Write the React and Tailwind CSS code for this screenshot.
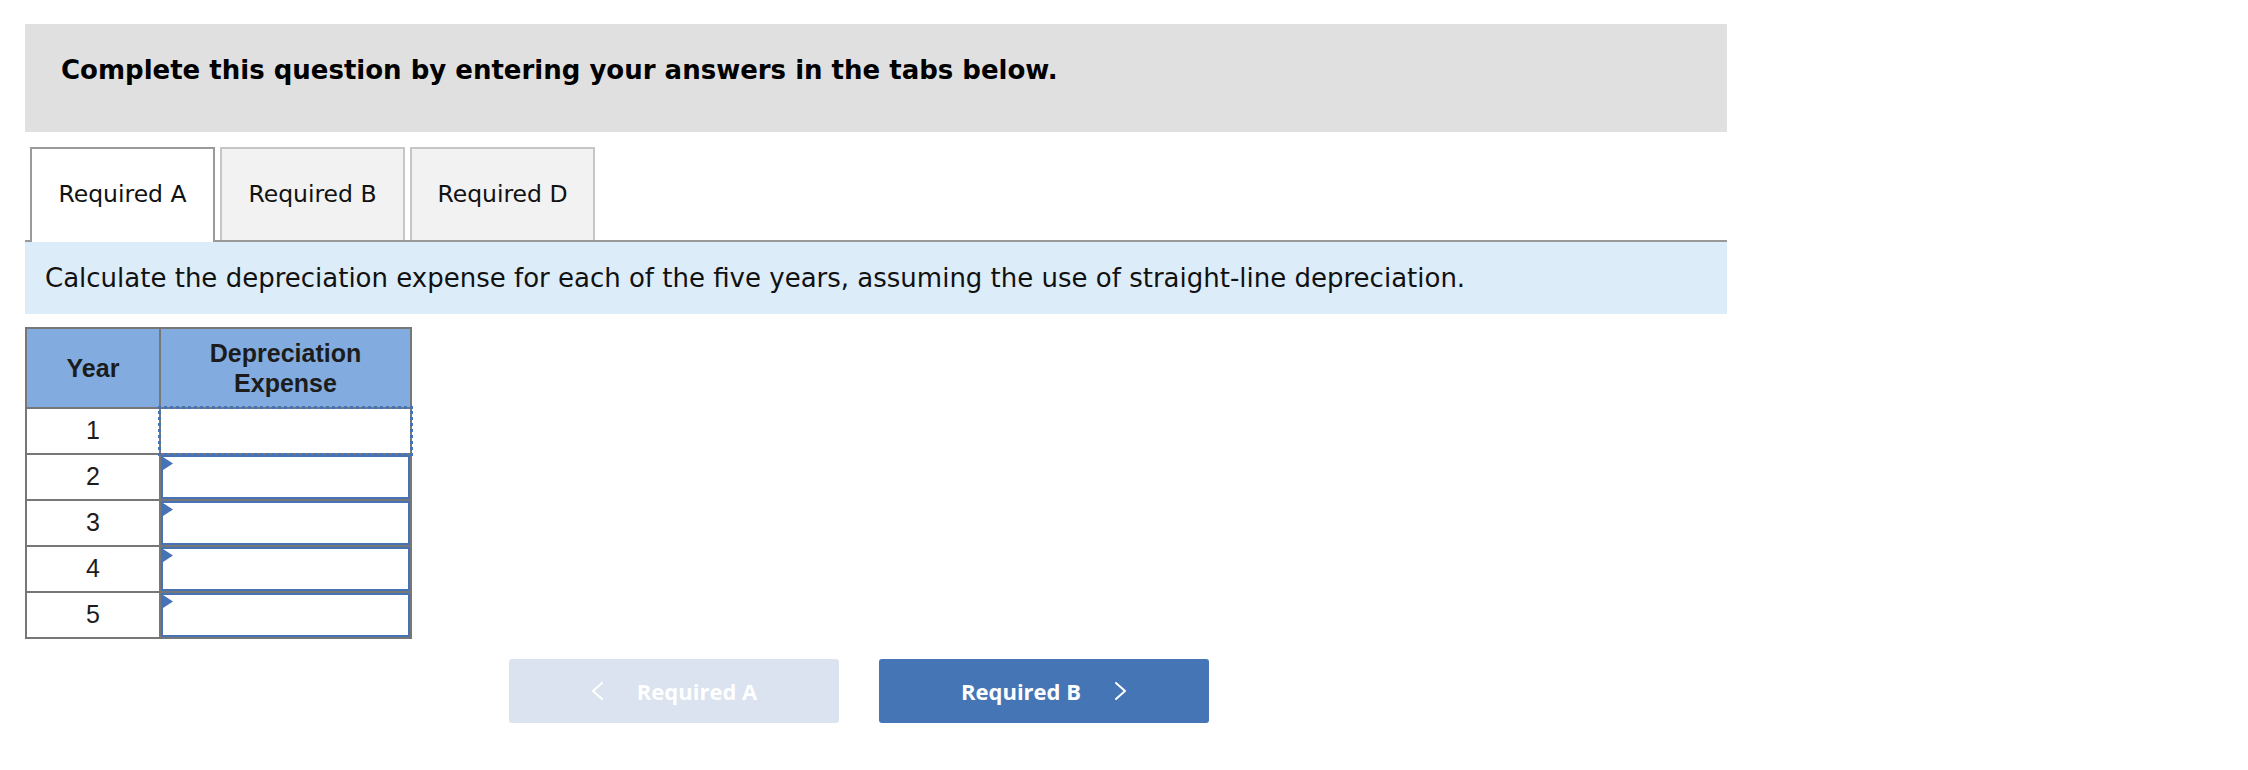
import React from 'react';

const years = [1, 2, 3, 4, 5];

function Marker() {
    return (
        <svg className="absolute left-0 top-0" width="10" height="13" viewBox="0 0 10 13">
            <polygon points="0,0 10,6.5 0,13" fill="#4673b6" />
        </svg>
    );
}

function Chevron({ dir }) {
    const pts = dir === 'left' ? '11,1 2,9 11,17' : '1,1 10,9 1,17';
    return (
        <svg width="12" height="18" viewBox="0 0 12 18" fill="none">
            <polyline points={pts} stroke="white" strokeWidth="2" strokeLinejoin="round" strokeLinecap="round" />
        </svg>
    );
}

export default function App() {
    return (
        <div className="min-h-screen bg-white pl-[25px] pt-[24px]">
            <div className="w-[1702px]">
                {/* Header */}
                <div className="h-[108px] bg-[#e0e0e0] pl-[36px] pt-[31px] text-[26px] font-bold leading-[30px] text-black font-['DejaVu_Sans',sans-serif]">
                    Complete this question by entering your answers in the tabs below.
                </div>

                {/* Tabs */}
                <div className="mt-[15px] flex h-[95px] items-start gap-[5px] border-b-2 border-[#999999] pl-[5px] font-['DejaVu_Sans',sans-serif] text-[23.5px] text-[#111]">
                    <div className="relative z-10 flex h-[95px] w-[185px] items-center justify-center border-2 border-b-0 border-[#9a9a9a] bg-white pb-[2px]">
                        Required A
                    </div>
                    <div className="flex h-[93px] w-[185px] items-center justify-center border-2 border-b-0 border-[#c6c6c6] bg-[#f2f2f2]">
                        Required B
                    </div>
                    <div className="flex h-[93px] w-[185px] items-center justify-center border-2 border-b-0 border-[#c6c6c6] bg-[#f2f2f2]">
                        Required D
                    </div>
                </div>

                {/* Instruction */}
                <div className="flex h-[72px] items-center bg-[#ddecf9] pl-[20px] font-['DejaVu_Sans',sans-serif] text-[26px] text-[#111]">
                    Calculate the depreciation expense for each of the five years, assuming the use of straight-line depreciation.
                </div>

                {/* Table */}
                <div className="mt-[13px] w-[387px] border-2 border-[#777777] font-['Liberation_Sans',Arial,sans-serif] text-[#1c1c1c]">
                    <div className="grid h-[78px] grid-cols-[134px_1fr] bg-[#82acdf] text-[25px] font-bold leading-[30px]">
                        <div className="flex items-center justify-center border-r-2 border-[#777777]">Year</div>
                        <div className="flex items-center justify-center text-center">
                            Depreciation
                            <br />
                            Expense
                        </div>
                    </div>
                    {years.map((y) => (
                        <div key={y} className="grid h-[46px] grid-cols-[134px_1fr] border-t-2 border-[#777777] text-[25px]">
                            <div className="flex items-center justify-center border-r-2 border-[#777777]">{y}</div>
                            {y === 1 ? (
                                <div className="outline-[3px] outline-dotted outline-[#4673b6]" />
                            ) : (
                                <div className="relative border-2 border-[#4673b6]">
                                    <Marker />
                                </div>
                            )}
                        </div>
                    ))}
                </div>

                {/* Nav buttons */}
                <div className="mt-[20px] flex gap-[40px] pl-[484px] font-['Open_Sans',sans-serif] text-[22px] font-bold text-white">
                    <button className="flex h-[64px] w-[330px] items-center justify-center gap-[34px] rounded-[3px] bg-[#dae3ef]">
                        <Chevron dir="left" />
                        <span>Required A</span>
                    </button>
                    <button className="flex h-[64px] w-[330px] items-center justify-center gap-[34px] rounded-[3px] bg-[#4675b5]">
                        <span>Required B</span>
                        <Chevron dir="right" />
                    </button>
                </div>
            </div>
        </div>
    );
}
